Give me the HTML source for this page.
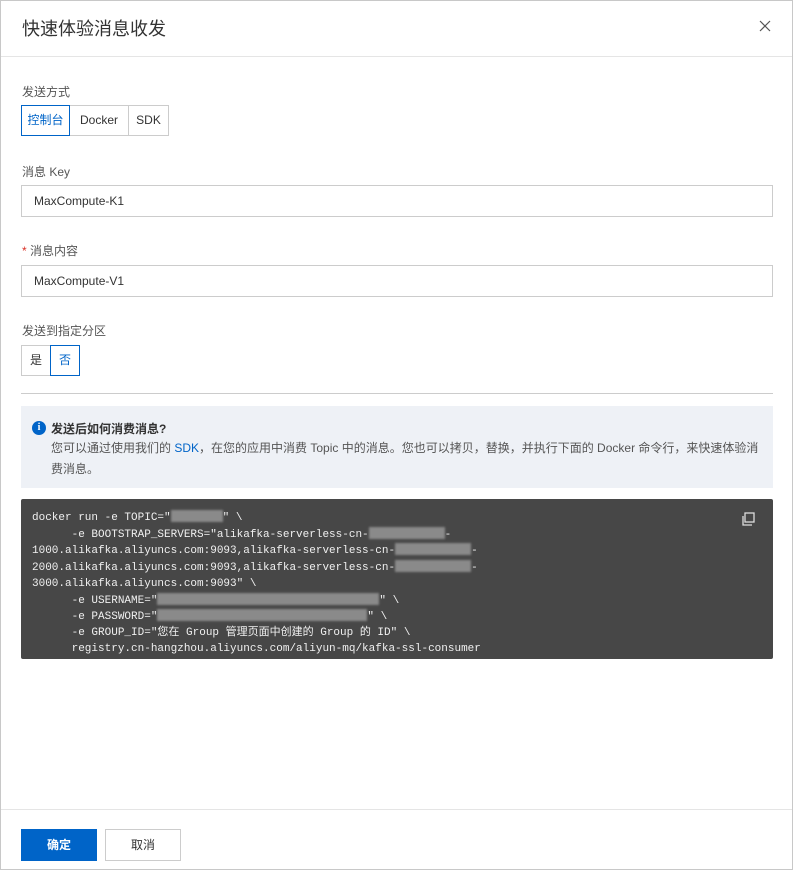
<!DOCTYPE html>
<html><head><meta charset="utf-8"><style>
*{box-sizing:border-box;margin:0;padding:0}
body{width:793px;height:870px;background:#fff;font-family:"Liberation Sans","Noto Sans CJK SC",sans-serif;color:#333;font-size:12px;position:relative;overflow:hidden}
.frame{position:absolute;left:0;top:0;width:793px;height:870px;border:1px solid #c8c8c8}
.title{position:absolute;left:22px;top:15px;font-size:18px;color:#333}
.close{position:absolute;left:758px;top:19px;width:14px;height:14px}
.hr{position:absolute;left:1px;right:1px;height:1px;background:#e5e5e5}
.lbl{position:absolute;left:22px;font-size:12px;color:#555}
.seg{position:absolute;left:21px;display:flex}
.seg div{height:31px;border:1px solid #ccc;margin-left:-1px;line-height:29px;font-size:12px;color:#333;background:#fff;text-align:center}
.seg div.on{border-color:#0064c8;color:#0064c8;position:relative;z-index:1}
.inp{position:absolute;left:21px;width:752px;height:32px;border:1px solid #ccc;padding-left:12px;line-height:30px;font-size:12px;color:#333}
.info{position:absolute;left:21px;top:406px;width:752px;height:82px;background:#eef1f6;padding:14px 12px 0 30px}
.info b{font-weight:bold;color:#333;font-size:12px}
.info p{color:#555;line-height:21px;margin-top:1px}
.ic{position:absolute;left:11px;top:15px;width:14px;height:14px;border-radius:50%;background:#0064c8;color:#fff;font-size:10px;font-weight:bold;text-align:center;line-height:14px;font-family:"Liberation Serif",serif}
.code{position:absolute;left:21px;top:499px;width:752px;height:160px;background:#474747;border-radius:2px;padding:11px 11px;font-family:"Liberation Mono","Noto Sans CJK SC",monospace;font-size:11px;line-height:15.7px;color:#f0f0f0;white-space:pre}
.bl{display:inline-block;background:#8a8a8a;height:12px;vertical-align:-2px;filter:blur(1px)}
.btn{position:absolute;top:829px;height:32px;line-height:30px;text-align:center;font-size:12px}
</style></head><body>
<div class="frame"></div>
<div class="title">快速体验消息收发</div>
<svg class="close" viewBox="0 0 14 14"><path d="M2 2L12 12M12 2L2 12" stroke="#555" stroke-width="1.2"/></svg>
<div class="hr" style="top:56px"></div>
<div class="lbl" style="top:83px">发送方式</div>
<div class="seg" style="top:105px"><div class="on" style="margin-left:0;width:49px">控制台</div><div style="width:60px">Docker</div><div style="width:41px">SDK</div></div>
<div class="lbl" style="top:163px">消息 Key</div>
<div class="inp" style="top:185px">MaxCompute-K1</div>
<div class="lbl" style="top:242px"><span style="color:#d93026">*</span> 消息内容</div>
<div class="inp" style="top:265px">MaxCompute-V1</div>
<div class="lbl" style="top:322px">发送到指定分区</div>
<div class="seg" style="top:345px"><div style="margin-left:0;width:30px">是</div><div class="on" style="width:30px">否</div></div>
<div class="hr" style="top:393px;left:21px;right:20px;background:#ccc"></div>
<div class="info"><span class="ic">i</span><b>发送后如何消费消息?</b><p>您可以通过使用我们的 <span style="color:#0064c8">SDK</span>，在您的应用中消费 Topic 中的消息。您也可以拷贝，替换，并执行下面的 Docker 命令行，来快速体验消费消息。</p></div>
<div class="code">docker run -e TOPIC="<span class="bl" style="width:52px"></span>" \
      -e BOOTSTRAP_SERVERS="alikafka-serverless-cn-<span class="bl" style="width:76px"></span>-
1000.alikafka.aliyuncs.com:9093,alikafka-serverless-cn-<span class="bl" style="width:76px"></span>-
2000.alikafka.aliyuncs.com:9093,alikafka-serverless-cn-<span class="bl" style="width:76px"></span>-
3000.alikafka.aliyuncs.com:9093" \
      -e USERNAME="<span class="bl" style="width:222px"></span>" \
      -e PASSWORD="<span class="bl" style="width:210px"></span>" \
      -e GROUP_ID="您在 Group 管理页面中创建的 Group 的 ID" \
      registry.cn-hangzhou.aliyuncs.com/aliyun-mq/kafka-ssl-consumer</div>
<svg style="position:absolute;left:741px;top:512px" width="14" height="14" viewBox="0 0 14 14"><rect x="4" y="1" width="9" height="9" fill="none" stroke="#ddd" stroke-width="1.3"/><path d="M2 4v9h9" fill="none" stroke="#ddd" stroke-width="1.3"/></svg>
<div class="hr" style="top:809px"></div>
<div class="btn" style="left:21px;width:76px;background:#0064c8;color:#fff;border:1px solid #0064c8;font-weight:bold">确定</div>
<div class="btn" style="left:105px;width:76px;border:1px solid #ccc;color:#333">取消</div>
</body></html>
